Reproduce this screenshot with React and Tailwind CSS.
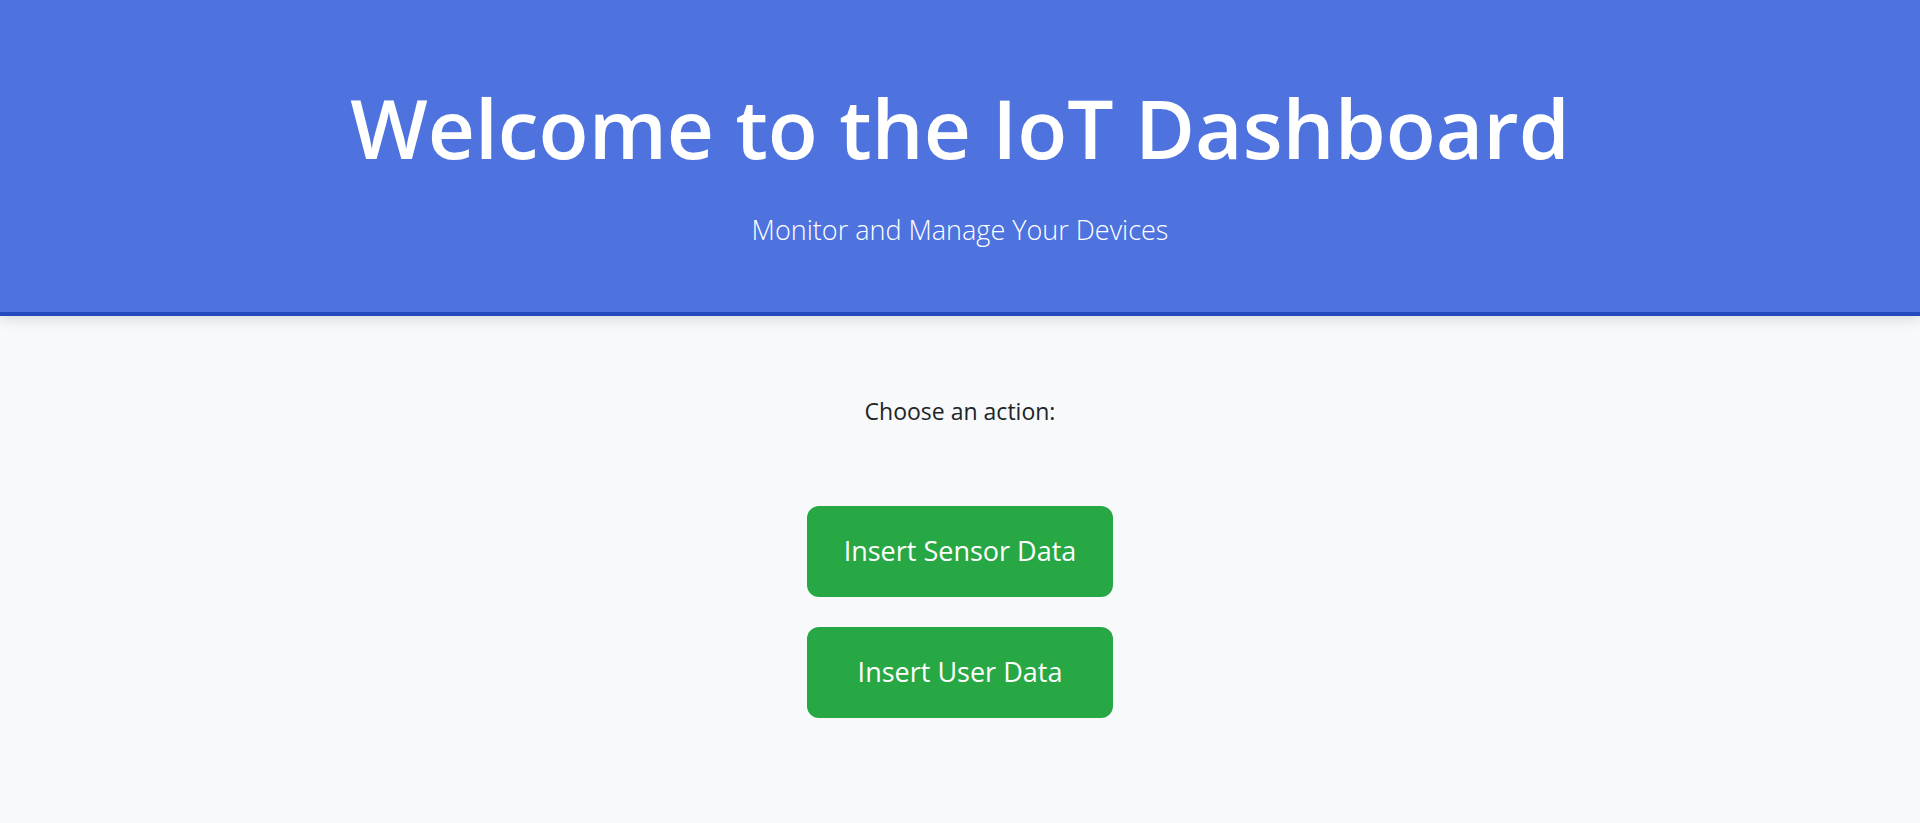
export default function App() {
    const font = { fontFamily: '"Open Sans", "Noto Sans", sans-serif' };
    return (
        <div className="min-h-screen bg-[#f8f9fa]" style={font}>
            {/* header */}
            <header className="h-[316px] bg-[#4e73df] border-b-4 border-[#224abe] shadow-[0_4px_12px_rgba(0,0,0,0.12)] flex flex-col items-center text-white pt-[86px]">
                <h1 className="text-[82px] font-semibold leading-none">Welcome to the IoT Dashboard</h1>
                <p className="mt-[48px] text-[27px] font-light leading-none">Monitor and Manage Your Devices</p>
            </header>

            {/* actions */}
            <main className="flex flex-col items-center pt-[84px]">
                <p className="text-[23px] text-[#212529] leading-none">Choose an action:</p>
                <div className="flex flex-col gap-[30px] mt-[83px]">
                    <button className="w-[306px] h-[91px] rounded-[12px] bg-[#28a745] text-white text-[27px]">Insert Sensor Data</button>
                    <button className="w-[306px] h-[91px] rounded-[12px] bg-[#28a745] text-white text-[27px]">Insert User Data</button>
                </div>
            </main>
        </div>
    );
}
